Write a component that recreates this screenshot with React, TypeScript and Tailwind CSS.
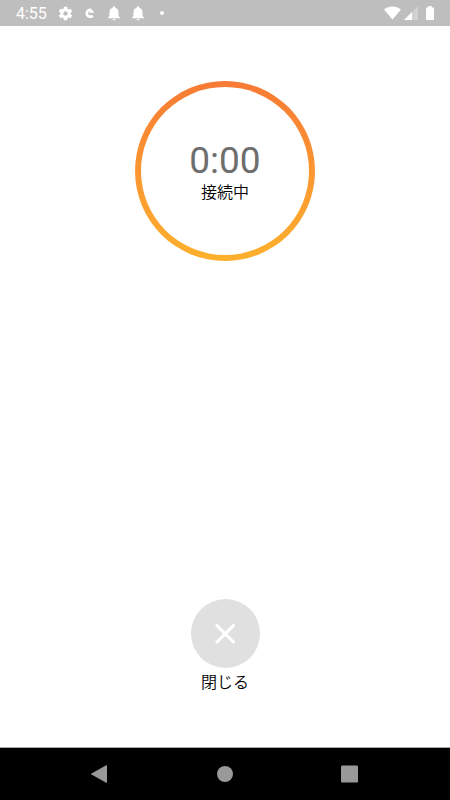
import { useState } from 'react';

function StatusBar() {
    return (
        <header className="flex h-[26px] items-center justify-between bg-[#bebebe] pl-4 pr-4 text-white">
            <div className="flex items-center">
                <span className="w-[41px] pt-0.5 text-base leading-6">4:55</span>
                <svg className="size-[17px]" viewBox="0 0 24 24" fill="currentColor" aria-hidden="true">
                    <path d="M19.14 12.94c.04-.3.06-.61.06-.94 0-.32-.02-.64-.07-.94l2.03-1.58c.18-.14.23-.41.12-.61l-1.92-3.32c-.12-.22-.37-.29-.59-.22l-2.39.96c-.5-.38-1.03-.7-1.62-.94l-.36-2.54c-.04-.24-.24-.41-.48-.41h-3.84c-.24 0-.43.17-.47.41l-.36 2.54c-.59.24-1.13.57-1.62.94l-2.39-.96c-.22-.08-.47 0-.59.22L2.74 8.87c-.12.21-.08.47.12.61l2.03 1.58c-.05.3-.09.63-.09.94s.02.64.07.94l-2.03 1.58c-.18.14-.23.41-.12.61l1.92 3.32c.12.22.37.29.59.22l2.39-.96c.5.38 1.03.7 1.62.94l.36 2.54c.05.24.24.41.48.41h3.84c.24 0 .44-.17.47-.41l.36-2.54c.59-.24 1.13-.56 1.62-.94l2.39.96c.22.08.47 0 .59-.22l1.92-3.32c.12-.22.07-.47-.12-.61l-2.01-1.58zM12 15.2c-1.78 0-3.2-1.42-3.2-3.2s1.42-3.2 3.2-3.2 3.2 1.42 3.2 3.2-1.42 3.2-3.2 3.2z" />
                </svg>
                <svg className="ml-2 size-4" viewBox="0 0 16 16" fill="none" stroke="currentColor" aria-hidden="true">
                    <path d="M10.8 10.6A3.5 3.5 0 1 1 9 4.8" strokeWidth="2.6" />
                    <path d="M6.8 7.8L8.6 3.6l4 4.2z" fill="currentColor" stroke="none" />
                </svg>
                <BellIcon />
                <BellIcon />
                <span className="ml-3.5 size-1 rounded-full bg-white" />
            </div>
            <div className="flex items-center">
                <svg className="h-[14px] w-[17px]" viewBox="0 0 17 14" fill="currentColor" aria-hidden="true">
                    <path d="M0 3.6C2.3 1.7 5.2.6 8.5.6s6.2 1.1 8.5 3L8.5 13.6z" />
                </svg>
                <svg className="ml-[3px] size-[14px]" viewBox="0 0 14 14" fill="currentColor" aria-hidden="true">
                    <path d="M0 14L14 0v14z" fillOpacity=".3" />
                    <path d="M0 14L8 6v8z" />
                </svg>
                <svg className="ml-2 h-[14px] w-2" viewBox="0 0 8 14" fill="currentColor" aria-hidden="true">
                    <path d="M2.3 0h3.4v1.4h1.5q.8 0 .8.8v11q0 .8-.8.8H.8q-.8 0-.8-.8v-11q0-.8.8-.8h1.5z" />
                </svg>
            </div>
        </header>
    );
}

function BellIcon() {
    return (
        <svg className="ml-2 size-4" viewBox="0 0 24 24" fill="currentColor" aria-hidden="true">
            <path d="M12 23c1.2 0 2.2-.9 2.2-2H9.8c0 1.1 1 2 2.2 2zm6.8-6.6v-5.6c0-3.2-2-5.8-5.1-6.5v-.8c0-.9-.8-1.7-1.7-1.7s-1.7.8-1.7 1.7v.8c-3.1.7-5.1 3.3-5.1 6.5v5.6L3 18.6v1.1h18v-1.1z" />
        </svg>
    );
}

function NavigationBar() {
    return (
        <nav className="flex h-[53px] items-center justify-between border-t border-[#a8a8a8] bg-black px-[91px] text-[#999]">
            <button type="button" aria-label="戻る">
                <svg className="size-[18px]" viewBox="0 0 18 18" fill="currentColor">
                    <path d="M15.2.2Q16 0 16 .8v16.4q0 .8-.8.5L.5 9.6q-.8-.6 0-1.2z" />
                </svg>
            </button>
            <button type="button" aria-label="ホーム">
                <svg className="size-[18px]" viewBox="0 0 18 18" fill="currentColor">
                    <circle cx="9" cy="9" r="8" />
                </svg>
            </button>
            <button type="button" aria-label="最近使ったアプリ">
                <svg className="size-[18px]" viewBox="0 0 18 18" fill="currentColor">
                    <rect x="0" y=".5" width="17" height="17" rx="1.2" />
                </svg>
            </button>
        </nav>
    );
}

export default function App() {
    const [closed, setClosed] = useState(false);

    return (
        <div className="flex min-h-screen flex-col bg-white font-[Roboto,'Noto_Sans_CJK_JP',sans-serif]">
            <StatusBar />

            <main className="flex flex-1 flex-col items-center justify-between pt-[55px] pb-[52px]">
                {/* Call timer */}
                <div className="rounded-full bg-linear-to-b from-[#f77a34] to-[#fdb02c] p-[6px]">
                    <div className="flex size-[168px] flex-col items-center justify-center rounded-full bg-white pt-3">
                        <time className="text-[37px] leading-8 text-[#6e6e6e]">0:00</time>
                        <p className="text-base leading-8 font-[350] text-black">{closed ? '終了' : '接続中'}</p>
                    </div>
                </div>

                {/* Close */}
                <div className="flex flex-col items-center">
                    <button
                        id="close"
                        type="button"
                        aria-labelledby="close-label"
                        onClick={() => setClosed(true)}
                        className="flex size-[69px] items-center justify-center rounded-full bg-[#e0e0e0]"
                    >
                        <svg className="size-6" viewBox="0 0 24 24" fill="none" stroke="white" strokeWidth="3">
                            <path d="M3 2.6l18.4 18.4M21.4 2.6L3 21" />
                        </svg>
                    </button>
                    <label id="close-label" htmlFor="close" className="mt-[3px] text-base leading-6 font-[350] text-black">
                        閉じる
                    </label>
                </div>
            </main>

            <NavigationBar />
        </div>
    );
}
